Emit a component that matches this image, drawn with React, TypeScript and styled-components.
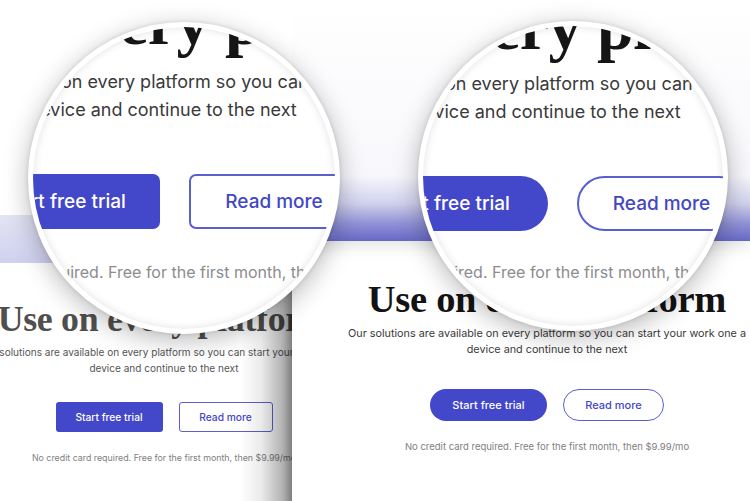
import React from "react";
import styled, { createGlobalStyle } from "styled-components";

const GlobalStyle = createGlobalStyle`
  html, body { margin: 0; padding: 0; background: #fff; }
  body { font-family: Inter, "Noto Sans", sans-serif; }
  * { box-sizing: border-box; }
`;

const Root = styled.div`
  position: relative;
  width: 750px;
  height: 501px;
  overflow: hidden;
  display: flex;
  background: #fff;
`;

const LeftPage = styled.div`
  flex: none;
  width: 292px;
  display: flex;
  flex-direction: column;
  overflow: hidden;
  position: relative;
  z-index: 2;
`;

const LeftTop = styled.div`
  flex: none;
  height: 215px;
  background: #fff;
`;

const LeftBand = styled.div`
  flex: none;
  height: 48px;
  background: linear-gradient(180deg, #e4e4f5 0%, #cfd0ee 100%);
`;

const RightPage = styled.div`
  flex: 1;
  min-width: 0;
  display: flex;
  flex-direction: column;
  position: relative;
  z-index: 1;
`;

const RightTop = styled.div`
  flex: none;
  height: 241px;
  display: flex;
  align-items: flex-end;
  padding: 0 0 0 21px;
  background: linear-gradient(
    180deg,
    #fff 0px,
    #f8f8fc 175px,
    #d2d2ee 203px,
    #8f90d5 224px,
    #6768c6 241px
  );
  box-shadow: 0 6px 14px rgba(0, 0, 0, 0.1);
  position: relative;
  z-index: 1;
`;

const NavLink = styled.span`
  font-size: 8px;
  line-height: 10px;
  color: rgba(255, 255, 255, 0.1);
`;

type Spec = {
  s: number;
  w: number;
  top: number;
  gapPara: number;
  gapBtn: number;
  gapNote: number;
  radius: number;
  btnH: number;
  startW: number;
  readW: number;
  dim: boolean;
};

const Body = styled.div<{ $w: number; $top: number }>`
  flex: 1;
  width: ${(p) => p.$w}px;
  display: flex;
  flex-direction: column;
  align-items: center;
  padding-top: ${(p) => p.$top}px;
  background: #fff;
  position: relative;
`;

const EdgeShade = styled.div`
  position: absolute;
  top: 263px;
  right: 0;
  bottom: 0;
  width: 52px;
  background: linear-gradient(
    90deg,
    rgba(0, 0, 0, 0) 0%,
    rgba(0, 0, 0, 0.08) 40%,
    rgba(0, 0, 0, 0.3) 82%,
    rgba(0, 0, 0, 0.5) 100%
  );
  pointer-events: none;
`;

const Headline = styled.h1<{ $s: number; $dim: boolean }>`
  margin: 0;
  font-family: "Liberation Serif", "DejaVu Serif", serif;
  font-weight: 700;
  font-size: ${(p) => 38.5 * p.$s}px;
  line-height: ${(p) => 44 * p.$s}px;
  letter-spacing: -0.3px;
  white-space: nowrap;
  color: ${(p) => (p.$dim ? "#4f4f4f" : "#131313")};
`;

const Para = styled.p<{ $s: number; $gap: number; $dim: boolean }>`
  margin: ${(p) => p.$gap}px 0 0;
  font-size: ${(p) => 10.8 * p.$s}px;
  line-height: 16px;
  text-align: center;
  color: ${(p) => (p.$dim ? "#555" : "#3a3a3a")};
`;

const Line = styled.span`
  display: block;
  white-space: nowrap;
`;

const ButtonRow = styled.div<{ $gap: number; $space: number }>`
  display: flex;
  gap: ${(p) => p.$space}px;
  margin-top: ${(p) => p.$gap}px;
`;

const Button = styled.div<{
  $w: number;
  $h: number;
  $r: number;
  $fs: number;
  $outline?: boolean;
  $bw?: number;
}>`
  flex: none;
  width: ${(p) => p.$w}px;
  height: ${(p) => p.$h}px;
  border-radius: ${(p) => p.$r}px;
  display: flex;
  align-items: center;
  justify-content: center;
  font-size: ${(p) => p.$fs}px;
  font-weight: 500;
  white-space: nowrap;
  background: ${(p) => (p.$outline ? "#fff" : "#4347c9")};
  color: ${(p) => (p.$outline ? "#4347c6" : "#fff")};
  border: ${(p) => (p.$outline ? `${p.$bw ?? 1}px solid #5a5ed0` : "none")};
`;

const Note = styled.div<{ $s: number; $gap: number }>`
  margin-top: ${(p) => p.$gap}px;
  font-size: ${(p) => 9.5 * p.$s}px;
  line-height: 13px;
  color: #808080;
  white-space: nowrap;
`;

const PARA1 =
  "Our solutions are available on every platform so you can start your work one a";
const PARA2 = "device and continue to the next";
const NOTE = "No credit card required. Free for the first month, then $9.99/mo";

function PageBody({ spec }: { spec: Spec }) {
  const { s } = spec;
  return (
    <Body $w={spec.w} $top={spec.top}>
      <Headline $s={s} $dim={spec.dim}>
        Use on every platform
      </Headline>
      <Para $s={s} $gap={spec.gapPara} $dim={spec.dim}>
        <Line>{PARA1}</Line>
        <Line>{PARA2}</Line>
      </Para>
      <ButtonRow $gap={spec.gapBtn} $space={16}>
        <Button $w={spec.startW} $h={spec.btnH} $r={spec.radius} $fs={11 * s}>
          Start free trial
        </Button>
        <Button
          $outline
          $w={spec.readW}
          $h={spec.btnH}
          $r={spec.radius}
          $fs={11 * s}
        >
          Read more
        </Button>
      </ButtonRow>
      <Note $s={s} $gap={spec.gapNote}>
        {NOTE}
      </Note>
    </Body>
  );
}

const Lens = styled.div<{ $x: number; $y: number; $size: number }>`
  position: absolute;
  left: ${(p) => p.$x}px;
  top: ${(p) => p.$y}px;
  width: ${(p) => p.$size}px;
  height: ${(p) => p.$size}px;
  border-radius: 50%;
  border: 5px solid #fff;
  background: #fff;
  overflow: hidden;
  z-index: 5;
  box-shadow: 0 6px 26px rgba(0, 0, 0, 0.28), 0 0 4px rgba(0, 0, 0, 0.12),
    inset 0 0 8px rgba(0, 0, 0, 0.12);
`;

const LensContent = styled.div<{ $left: number; $top: number }>`
  position: absolute;
  left: ${(p) => p.$left}px;
  top: ${(p) => p.$top}px;
  width: 800px;
  display: flex;
  flex-direction: column;
  align-items: center;
`;

const LensHeadline = styled.div<{ $shift: number }>`
  font-family: "Liberation Serif", "DejaVu Serif", serif;
  font-weight: 700;
  font-size: 66px;
  line-height: 64px;
  letter-spacing: -0.5px;
  white-space: nowrap;
  color: #151515;
  margin-left: ${(p) => p.$shift}px;
`;

const LensPara = styled.div<{ $gap: number }>`
  margin-top: ${(p) => p.$gap}px;
  font-size: 18px;
  line-height: 28px;
  text-align: center;
  color: #3a3a3a;
`;

const LensNote = styled.div<{ $gap: number }>`
  margin-top: ${(p) => p.$gap}px;
  font-size: 16px;
  line-height: 22px;
  color: #8c8c8c;
  white-space: nowrap;
`;

type LensSpec = {
  x: number;
  y: number;
  size: number;
  left: number;
  top: number;
  gapPara: number;
  gapNote: number;
  radius: number;
  startW: number;
  shift: number;
};

function Magnifier({ spec }: { spec: LensSpec }) {
  return (
    <Lens $x={spec.x} $y={spec.y} $size={spec.size}>
      <LensContent $left={spec.left} $top={spec.top}>
        <LensHeadline $shift={spec.shift}>Use on every platform</LensHeadline>
        <LensPara $gap={spec.gapPara}>
          <Line>{PARA1}</Line>
          <Line>{PARA2}</Line>
        </LensPara>
        <ButtonRow $gap={50} $space={29}>
          <Button $w={spec.startW} $h={55} $r={spec.radius} $fs={19}>
            Start free trial
          </Button>
          <Button $outline $bw={2} $w={170} $h={55} $r={spec.radius} $fs={19}>
            Read more
          </Button>
        </ButtonRow>
        <LensNote $gap={spec.gapNote}>{NOTE}</LensNote>
      </LensContent>
    </Lens>
  );
}

const leftSpec: Spec = {
  s: 0.93,
  w: 328,
  top: 36,
  gapPara: 4,
  gapBtn: 26,
  gapNote: 19,
  radius: 3,
  btnH: 30,
  startW: 107,
  readW: 94,
  dim: true,
};

const rightSpec: Spec = {
  s: 1,
  w: 510,
  top: 36,
  gapPara: 5,
  gapBtn: 31,
  gapNote: 19,
  radius: 16,
  btnH: 32,
  startW: 117,
  readW: 101,
  dim: false,
};

const leftLens: LensSpec = {
  x: 28,
  y: 22,
  size: 312,
  left: -270,
  top: -37,
  gapPara: 14,
  gapNote: 32,
  radius: 7,
  startW: 193,
  shift: 0,
};

const rightLens: LensSpec = {
  x: 418,
  y: 21,
  size: 310,
  left: -276,
  top: -31,
  gapPara: 11,
  gapNote: 30,
  radius: 28,
  startW: 200,
  shift: -24,
};

export default function App() {
  return (
    <>
      <GlobalStyle />
      <Root>
        <LeftPage>
          <LeftTop />
          <LeftBand />
          <PageBody spec={leftSpec} />
          <EdgeShade />
        </LeftPage>
        <RightPage>
          <RightTop>
            <NavLink>About</NavLink>
          </RightTop>
          <PageBody spec={rightSpec} />
        </RightPage>
        <Magnifier spec={leftLens} />
        <Magnifier spec={rightLens} />
      </Root>
    </>
  );
}
